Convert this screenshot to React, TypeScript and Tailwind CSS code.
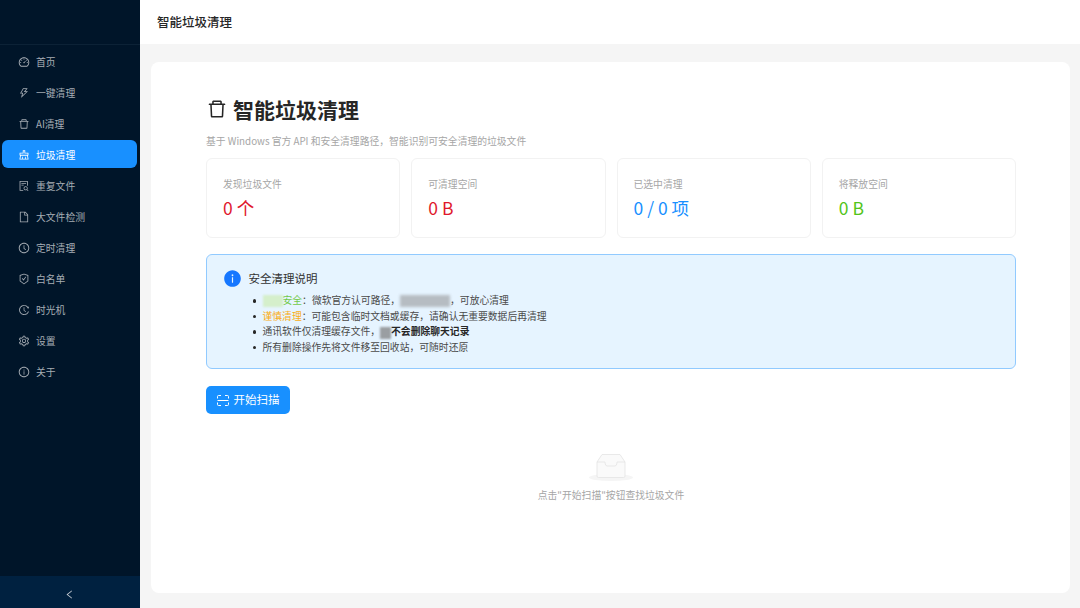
import type { ReactNode } from "react";
import {
  AiOutlineDashboard,
  AiOutlineThunderbolt,
  AiOutlineDelete,
  AiOutlineClear,
  AiOutlineFileSearch,
  AiOutlineFile,
  AiOutlineClockCircle,
  AiOutlineSafetyCertificate,
  AiOutlineHistory,
  AiOutlineSetting,
  AiOutlineInfoCircle,
  AiFillInfoCircle,
  AiOutlineLeft,
} from "react-icons/ai";

const menu = [
  { name: "首页", icon: AiOutlineDashboard },
  { name: "一键清理", icon: AiOutlineThunderbolt },
  { name: "AI清理", icon: AiOutlineDelete },
  { name: "垃圾清理", icon: AiOutlineClear, active: true },
  { name: "重复文件", icon: AiOutlineFileSearch },
  { name: "大文件检测", icon: AiOutlineFile },
  { name: "定时清理", icon: AiOutlineClockCircle },
  { name: "白名单", icon: AiOutlineSafetyCertificate },
  { name: "时光机", icon: AiOutlineHistory },
  { name: "设置", icon: AiOutlineSetting },
  { name: "关于", icon: AiOutlineInfoCircle },
];

const stats = [
  { label: "发现垃圾文件", value: "0 个", color: "text-[#e0182d]" },
  { label: "可清理空间", value: "0 B", color: "text-[#e0182d]" },
  { label: "已选中清理", value: "0 / 0 项", color: "text-[#1890ff]" },
  { label: "将释放空间", value: "0 B", color: "text-[#52c41a]" },
];

const Sidebar = () => (
  <aside className="flex w-[140px] shrink-0 flex-col bg-[#001529]">
    <div className="h-[45px] shrink-0 border-b border-[#0c2236]" />
    <nav className="flex flex-1 flex-col gap-[3px] px-[2px] pt-[2px]">
      {menu.map((item) => (
        <div
          key={item.name}
          className={`flex h-[28px] w-[135px] items-center gap-[6px] rounded-[6px] pl-[16px] pt-[2px] text-[9.8px] ${
            item.active ? "bg-[#1890ff] text-white" : "text-[#a6adb4]"
          }`}
        >
          <item.icon className="h-[12px] w-[12px]" />
          <span>{item.name}</span>
        </div>
      ))}
    </nav>
    <div className="flex h-[32px] shrink-0 items-center justify-center bg-[#002140] pr-[1px] pt-[4px] text-[#c4cbd2]">
      <AiOutlineLeft className="h-[11px] w-[11px]" />
    </div>
  </aside>
);

const Bullet = ({ children }: { children: ReactNode }) => (
  <li className="flex h-[15.6px] items-center gap-[6.5px]">
    <span className="h-[3.5px] w-[3.5px] rounded-full bg-[#262626]" />
    <span>{children}</span>
  </li>
);

const InfoBox = () => (
  <div className="mt-[16px] h-[115px] rounded-[6px] border border-[#91caff] bg-[#e6f4ff] pl-[15.5px] pt-[14px]">
    <div className="flex items-center gap-[7px] text-[#333333]">
      <AiFillInfoCircle className="h-[19px] w-[19px] text-[#1677ff]" />
      <span className="text-[11.5px]">安全清理说明</span>
    </div>
    <ul className="ml-[30px] mt-[5px] text-[9.8px] leading-[15.6px] text-[#4a4a4a]">
      <Bullet>
        <span className="inline-block h-[12px] w-[20px] bg-[#d5efcb] align-middle blur-[1px]" />
        <span className="text-[#73c947]">安全</span>：微软官方认可路径，
        <span className="inline-block h-[12px] w-[50px] bg-[#b6bcc2] align-middle blur-[1.5px]" />
        ，可放心清理
      </Bullet>
      <Bullet>
        <span className="text-[#faad14]">谨慎清理</span>：可能包含临时文档或缓存，请确认无重要数据后再清理
      </Bullet>
      <Bullet>
        通讯软件仅清理缓存文件，
        <span className="inline-block h-[12px] w-[11px] bg-[#9a9ea2] align-middle blur-[1px]" />
        <strong className="font-bold text-[#262626]">不会删除聊天记录</strong>
      </Bullet>
      <Bullet>所有删除操作先将文件移至回收站，可随时还原</Bullet>
    </ul>
  </div>
);

const ScanIcon = () => (
  <svg width="12" height="11" viewBox="0 0 12 11" fill="none" stroke="currentColor" strokeWidth="1">
    <path d="M.5 3.5V1.5a1 1 0 0 1 1-1H4M8 .5h2.5a1 1 0 0 1 1 1v2M.5 7.5v2a1 1 0 0 0 1 1H4M8 10.5h2.5a1 1 0 0 0 1-1v-2M.5 5.5h11" />
  </svg>
);

const EmptyState = () => (
  <div className="mt-[39px] flex flex-col items-center">
    <svg width="44" height="28" viewBox="0 0 44 28">
      <ellipse cx="22" cy="24.5" rx="22" ry="3.5" fill="#f5f5f5" />
      <path d="M8 9 L13 1.5 H31 L36 9 V23 a1.5 1.5 0 0 1 -1.5 1.5 H9.5 A1.5 1.5 0 0 1 8 23 Z" fill="#fafafa" stroke="#e3e3e3" strokeWidth="0.8" />
      <path d="M8 9 H16 C16 9 16 13 18 13 H26 C28 13 28 9 28 9 H36" fill="none" stroke="#e3e3e3" strokeWidth="0.8" />
    </svg>
    <p className="mt-[7px] text-[9.8px] text-[#a6a6a6]">点击"开始扫描"按钮查找垃圾文件</p>
  </div>
);

export default function App() {
  return (
    <div
      className="flex h-[608px] w-[1080px] overflow-hidden bg-[#f5f5f5]"
      style={{ fontFamily: '"Noto Sans CJK SC", "Noto Sans", sans-serif' }}
    >
      <Sidebar />
      <main className="flex min-w-0 flex-1 flex-col">
        <header className="flex h-[44px] shrink-0 items-center bg-white pl-[17px] text-[12.5px] font-medium text-[#262626]">
          智能垃圾清理
        </header>
        <div className="flex-1 pb-[15px] pl-[11px] pr-[10px] pt-[18px]">
          <section className="h-full rounded-[8px] bg-white pl-[55px] pr-[54px] pt-[31px]">
            <h1 className="flex items-center gap-[5px] text-[21px] font-semibold leading-[32px] text-[#262626]">
              <AiOutlineDelete className="h-[22px] w-[22px]" />
              智能垃圾清理
            </h1>
            <p className="mt-[8px] text-[9.8px] leading-[16px] text-[#a6a6a6]">
              基于 Windows 官方 API 和安全清理路径，智能识别可安全清理的垃圾文件
            </p>
            <div className="mt-[9px] grid grid-cols-4 gap-[11px]">
              {stats.map((s) => (
                <div key={s.label} className="h-[80px] rounded-[6px] border border-[#f2f2f2] pl-[16px] pt-[17px]">
                  <div className="text-[9.8px] leading-[16px] text-[#a6a6a6]">{s.label}</div>
                  <div className={`mt-[3px] text-[17.5px] leading-[26px] ${s.color}`}>{s.value}</div>
                </div>
              ))}
            </div>
            <InfoBox />
            <button className="mt-[17px] flex h-[28px] w-[84px] items-center justify-center gap-[5px] rounded-[5px] bg-[#1890ff] text-[11.5px] text-white">
              <ScanIcon />
              开始扫描
            </button>
            <EmptyState />
          </section>
        </div>
      </main>
    </div>
  );
}
